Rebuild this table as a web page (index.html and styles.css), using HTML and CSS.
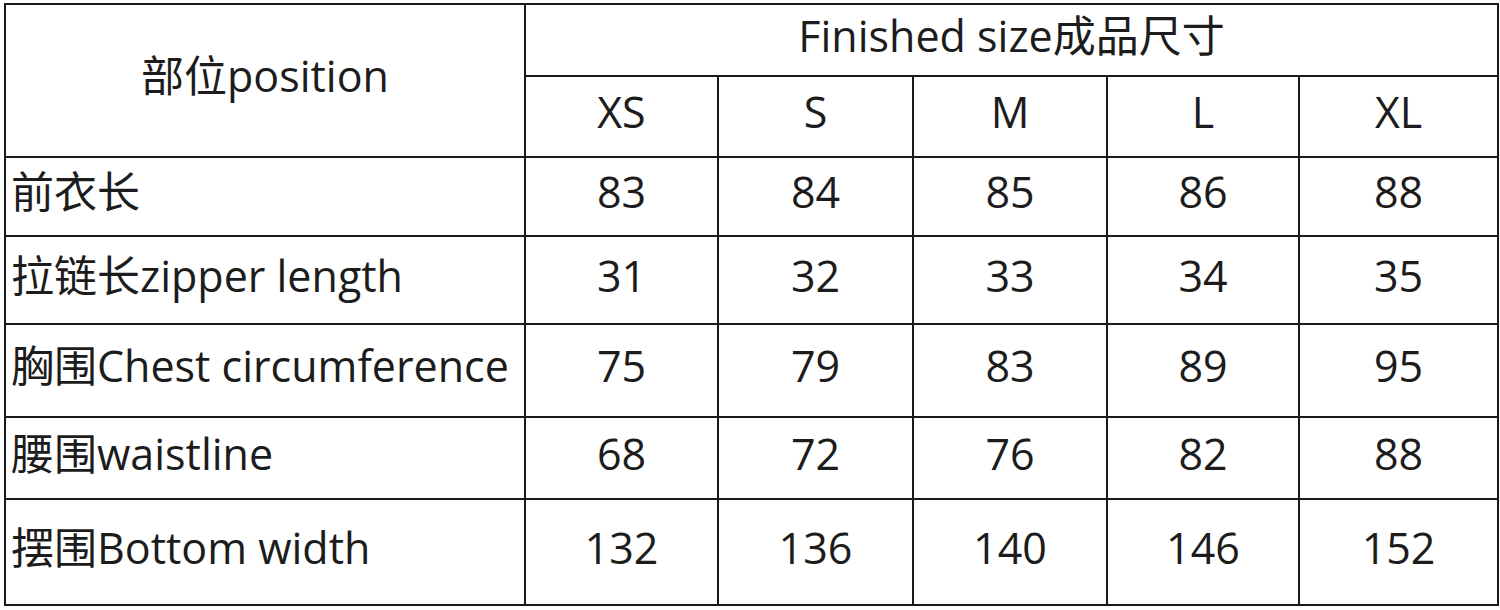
FILE: index.html
```html
<!DOCTYPE html>
<html lang="zh">
<head>
<meta charset="utf-8">
<title>Size chart</title>
<link rel="stylesheet" href="styles.css">
</head>
<body>
<table class="size-table">
  <colgroup>
    <col class="c-pos">
    <col class="c-size c1">
    <col class="c-size c2">
    <col class="c-size c3">
    <col class="c-size c4">
    <col class="c-size c5">
  </colgroup>
  <tr class="r-h1">
    <th rowspan="2" class="pos-head">部位position</th>
    <th colspan="5">Finished size成品尺寸</th>
  </tr>
  <tr class="r-h2">
    <th>XS</th><th>S</th><th>M</th><th>L</th><th>XL</th>
  </tr>
  <tr class="r1">
    <td class="label">前衣长</td><td>83</td><td>84</td><td>85</td><td>86</td><td>88</td>
  </tr>
  <tr class="r2">
    <td class="label">拉链长zipper length</td><td>31</td><td>32</td><td>33</td><td>34</td><td>35</td>
  </tr>
  <tr class="r3">
    <td class="label">胸围Chest circumference</td><td>75</td><td>79</td><td>83</td><td>89</td><td>95</td>
  </tr>
  <tr class="r4">
    <td class="label">腰围waistline</td><td>68</td><td>72</td><td>76</td><td>82</td><td>88</td>
  </tr>
  <tr class="r5">
    <td class="label">摆围Bottom width</td><td>132</td><td>136</td><td>140</td><td>146</td><td>152</td>
  </tr>
</table>
</body>
</html>
```
FILE: styles.css
```css
html, body {
  margin: 0;
  padding: 0;
  background: #ffffff;
}
body {
  padding: 3px 0 0 4px;
  font-family: "Open Sans", "Noto Sans CJK SC", sans-serif;
  color: #1c1c1c;
}
.size-table {
  border-collapse: collapse;
  table-layout: fixed;
  width: 1493px;
  font-size: 43px;
}
.c-pos { width: 520px; }
.c1 { width: 193px; }
.c2 { width: 195px; }
.c3 { width: 194px; }
.c4 { width: 192px; }
.c5 { width: 199px; }
.size-table th,
.size-table td {
  border: 2px solid #1a1a1a;
  padding: 0 0 10px 0;
  text-align: center;
  vertical-align: middle;
  font-weight: 400;
  white-space: nowrap;
  line-height: 1;
}
.size-table td.label {
  text-align: left;
  padding-left: 5px;
}
.r-h1 { height: 72px; }
.r-h2 { height: 81px; }
.r1 { height: 79px; }
.r2 { height: 88px; }
.r3 { height: 93px; }
.r4 { height: 82px; }
.r5 { height: 106px; }
```
